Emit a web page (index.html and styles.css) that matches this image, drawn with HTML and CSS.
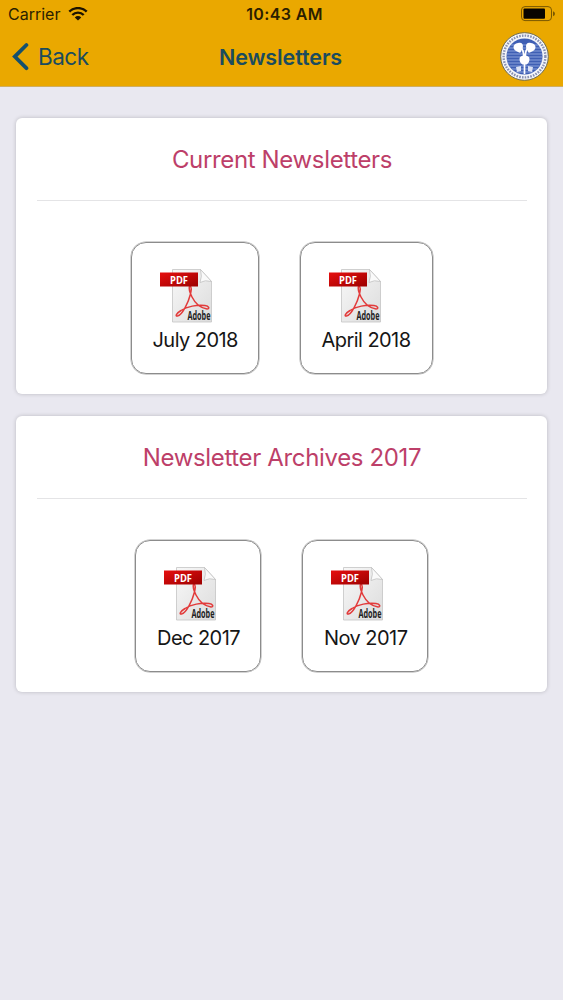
FILE: index.html
```
<!DOCTYPE html>
<html lang="en">
<head>
    <meta charset="UTF-8">
    <meta name="viewport" content="width=device-width, initial-scale=1.0">
    <title>Newsletters</title>
    <link rel="stylesheet" href="styles.css">
</head>
<body>
    <!-- Shared PDF icon -->
    <svg class="defs" width="0" height="0">
        <defs>
            <linearGradient id="paper" x1="0" y1="0" x2="1" y2="1">
                <stop offset="0" stop-color="#f8f8f8"/>
                <stop offset="1" stop-color="#dcdcdc"/>
            </linearGradient>
            <linearGradient id="red" x1="0" y1="0" x2="1" y2="1">
                <stop offset="0" stop-color="#e60f0f"/>
                <stop offset="1" stop-color="#9c0000"/>
            </linearGradient>
            <symbol id="pdf" viewBox="0 0 54 54">
                <path d="M12.5 .5h28l11 12v40.500h-39z" fill="url(#paper)" stroke="#c4c4c4" stroke-width=".8"/>
                <path d="M40.5 .5q2 7-.5 13 5-3 11.500-1z" fill="#fafafa" stroke="#bbb" stroke-width=".7"/>
                <path d="M29.500 17c-1 3 .5 7 2.500 11 3 6 8 11 15 12 3 0 2-3-2-3.500-8-1-18 1-24 5-5 3-6 6-3.500 5.500 5-1 11-14 13-22 1-4 1-7-.5-8.500" fill="none" stroke="#e23b3b" stroke-width="1.500" stroke-linejoin="round"/>
                <rect x="0" y="3.500" width="38" height="14" fill="url(#red)"/>
                <text x="10" y="14.500" textLength="18" lengthAdjust="spacingAndGlyphs" class="pdf-tag">PDF</text>
                <text x="27.500" y="51" textLength="23" lengthAdjust="spacingAndGlyphs" class="pdf-brand">Adobe</text>
            </symbol>
        </defs>
    </svg>

    <header class="header">
        <div class="status">
            <div class="carrier">
                <span>Carrier</span>
                <svg width="20" height="14" viewBox="0 0 20 14">
                    <path d="M1.300 4.700a12.300 12.300 0 0 1 17.400 0M4.300 8a8 8 0 0 1 11.400 0" fill="none" stroke="#1c1300" stroke-width="2.400"/>
                    <path d="M6.800 10.400a4.600 4.600 0 0 1 6.400 0L10 13.600z" fill="#1c1300"/>
                </svg>
            </div>
            <span class="time">10:43 AM</span>
            <svg class="battery" width="35" height="16" viewBox="0 0 35 16">
                <rect x="1.500" y=".6" width="30" height="14" rx="3.500" fill="none" stroke="#7a5800" stroke-width="1"/>
                <rect x="3.500" y="2.500" width="21.500" height="10.200" rx="1" fill="#080500"/>
                <path d="M33 5.300q2 .7 2 2.500t-2 2.500z" fill="#7a5800"/>
            </svg>
        </div>
        <div class="navbar">
            <a class="back">
                <svg width="18" height="30" viewBox="0 0 18 30">
                    <path d="M15.400 3L3.800 14.600l11.600 11.600" fill="none" stroke="#14506e" stroke-width="3.800" stroke-linecap="round" stroke-linejoin="miter"/>
                </svg>
                <span>Back</span>
            </a>
            <h1>Newsletters</h1>
            <svg class="logo" width="49" height="49" viewBox="0 0 49 49">
                <circle cx="24.500" cy="24.500" r="23.800" fill="#f4f5f8" stroke="#6c6b55" stroke-width="1"/>
                <circle cx="24.500" cy="24.500" r="20.900" fill="none" stroke="#8790b3" stroke-width="2.400" stroke-dasharray="1.600 1.200"/>
                <circle cx="24.500" cy="24.500" r="18" fill="#3f5fb4"/>
                <path d="M11 13h27M9 16h31M7.500 19h34M7 22h35M6.700 25h35.600M7 28h35M8 31h33M9.500 34h30M12 37h25M16 40h17" stroke="#9fb2e4" stroke-width=".8"/>
                <path d="M18 11c6-2 6 5 3 8 0 2-1 2-3 1-6-2-6-8 0-9zM31 11c-6-2-6 5-3 8 0 2 1 2 3 1 6-2 6-8 0-9z" fill="#fff"/>
                <path d="M24.500 22v20M21 16q2.500 2 2.700 8M28 16q-2.500 2-2.700 8" fill="none" stroke="#fff" stroke-width="1.700"/>
                <path d="M19.500 27q0-3.500 5-3.500t5 3.500-3 5.500h-4q-3-2-3-5.500z" fill="#fff"/>
                <path d="M16 35l5-1v5l-4 1zM33 35l-5-1v5l4 1z" fill="#dbe2f5"/>
            </svg>
        </div>
    </header>

    <main>
        <section class="card">
            <h2>Current Newsletters</h2>
            <div class="files">
                <a class="file july">
                    <svg class="icon"><use href="#pdf"/></svg>
                    <span>July 2018</span>
                </a>
                <a class="file april">
                    <svg class="icon"><use href="#pdf"/></svg>
                    <span>April 2018</span>
                </a>
            </div>
        </section>

        <section class="card">
            <h2>Newsletter Archives 2017</h2>
            <div class="files">
                <a class="file">
                    <svg class="icon"><use href="#pdf"/></svg>
                    <span>Dec 2017</span>
                </a>
                <a class="file">
                    <svg class="icon"><use href="#pdf"/></svg>
                    <span>Nov 2017</span>
                </a>
            </div>
        </section>
    </main>
</body>
</html>
```

FILE: styles.css
```
* {
    box-sizing: border-box;
}
body {
    margin: 0;
    min-height: 100vh;
    background: #e9e8f0;
    font-family: Inter, "Liberation Sans", sans-serif;
    color: #161616;
}
svg {
    display: block;
}
.defs {
    position: absolute;
}
.header {
    height: 87px;
    background: #eaa800;
    border-bottom: 1px solid #cfae62;
}
.status {
    display: grid;
    grid-template-columns: 1fr auto 1fr;
    align-items: center;
    height: 28px;
    padding: 0 8px;
    font-size: 16px;
    color: #2b1e00;
}
.carrier {
    display: flex;
    align-items: center;
    gap: 8px;
}
.time {
    font-weight: 600;
    letter-spacing: 0.35px;
    padding-left: 6px;
}
.battery {
    justify-self: end;
}
.navbar {
    display: grid;
    grid-template-columns: 1fr auto 1fr;
    align-items: center;
    height: 57px;
    padding: 0 14px 0 11px;
    color: #1b4c5e;
}
.back {
    display: flex;
    align-items: center;
    gap: 9px;
    font-size: 22.5px;
    letter-spacing: -0.5px;
}
h1 {
    margin: 0;
    padding-left: 1px;
    font-size: 21.5px;
    font-weight: 600;
    letter-spacing: -0.1px;
}
.logo {
    justify-self: end;
}
main {
    display: flex;
    flex-direction: column;
    gap: 22px;
    padding: 31px 16px;
}
.card {
    height: 276px;
    padding: 0 20px 0 21px;
    background: #fff;
    border-radius: 6px;
    box-shadow: 0 0 4px rgba(0, 0, 0, 0.2);
}
h2 {
    margin: 0 0 41px;
    height: 83px;
    line-height: 83px;
    border-bottom: 1px solid #e4e4e6;
    font-size: 24px;
    font-weight: 400;
    letter-spacing: -0.35px;
    text-align: center;
    color: #bd3f69;
}
.files {
    display: flex;
    justify-content: center;
    gap: 41px;
    margin-right: 1px;
}
.file {
    width: 126px;
    height: 132px;
    padding: 26px 0 0 21px;
    border: 1px solid #8c8c8c;
    border-radius: 15px;
    box-shadow: 0 0 0 0.5px #a8a8a8;
    font-size: 20px;
    letter-spacing: -0.55px;
    white-space: nowrap;
}
.file span {
    display: block;
    line-height: 34px;
}
.july {
    width: 128px;
}
.april {
    width: 133px;
}
.icon {
    width: 54px;
    height: 54px;
    margin-left: 7px;
    letter-spacing: 0;
}
.pdf-tag {
    font: bold 11px "Open Sans", sans-serif;
    fill: #fff;
}
.pdf-brand {
    font: bold 11.5px "Open Sans", sans-serif;
    fill: #222;
}
```
